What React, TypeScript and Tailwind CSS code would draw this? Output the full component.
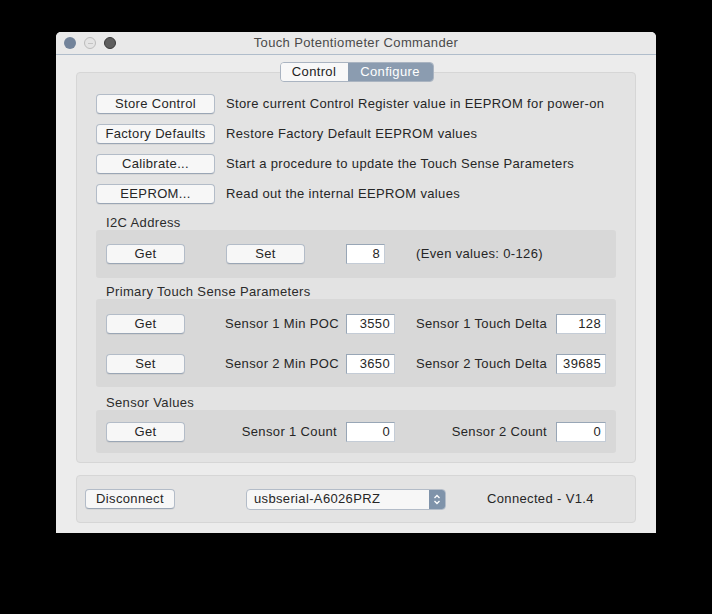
import * as React from 'react';

const font = { fontFamily: '"Liberation Sans", Arial, sans-serif' };

function Btn({ label, className = '' }: { label: string; className?: string }) {
  return (
    <div
      className={`flex h-[20px] items-center justify-center rounded-[4px] border border-[#b3bcc8] border-b-[#9aa6b5] bg-[#f7f7f7] text-[13px] text-[#262626] shadow-[0_1px_0_rgba(0,0,0,0.05)] ${className}`}
    >
      {label}
    </div>
  );
}

function Field({ value, className = '' }: { value: string; className?: string }) {
  return (
    <div
      className={`flex h-[20px] items-center justify-end border border-[#98a6b6] border-b-[#c4ccd6] border-r-[#c4ccd6] bg-white pr-[4px] text-[13px] text-[#262626] ${className}`}
    >
      {value}
    </div>
  );
}

function Label({ text }: { text: string }) {
  return <div className="flex h-[16px] items-center pl-[29px] pt-[1px] text-[13px] text-[#2b2b2b]">{text}</div>;
}

export default function App() {
  const actions = [
    ['Store Control', 'Store current Control Register value in EEPROM for power-on'],
    ['Factory Defaults', 'Restore Factory Default EEPROM values'],
    ['Calibrate...', 'Start a procedure to update the Touch Sense Parameters'],
    ['EEPROM...', 'Read out the internal EEPROM values'],
  ];

  return (
    <div className="h-[614px] w-[712px] bg-black pl-[56px] pt-[32px] tracking-[0.35px]" style={font}>
      <div className="flex h-[501px] w-[600px] flex-col rounded-t-[5px] bg-[#ececec]">
        {/* title bar */}
        <div className="relative flex h-[23px] items-center justify-center rounded-t-[5px] border-b border-[#b0bdcb] bg-[#e9e9e9]">
          <div className="absolute left-[8px] top-[5px] flex gap-[8px]">
            <div className="h-[12px] w-[12px] rounded-full bg-[#72839a]" />
            <div className="flex h-[12px] w-[12px] items-center justify-center rounded-full border border-[#bcbcbc] bg-[#e4e4e4]">
              <div className="h-[1px] w-[5px] bg-[#c4c4c4]" />
            </div>
            <div className="h-[12px] w-[12px] rounded-full border border-[#3a3a3a] bg-[#5e5e5e]" />
          </div>
          <span className="text-[13px] text-[#4a4a4a]">Touch Potentiometer Commander</span>
        </div>

        {/* segmented control */}
        <div className="relative z-10 mt-[7px] flex justify-center">
          <div className="ml-[1px] flex h-[20px] overflow-hidden rounded-[4px] border border-[#aab4c1] text-[13px]">
            <div className="flex w-[67px] items-center justify-center bg-[#f8f8f8] text-[#222]">Control</div>
            <div className="flex w-[85px] items-center justify-center bg-[#8b9cb0] text-white">Configure</div>
          </div>
        </div>

        {/* tab box */}
        <div className="mx-[20px] -mt-[10px] flex h-[391px] flex-col rounded-[4px] border border-[#d6d6d6] bg-[#e3e3e3] pt-[21px]">
          <div className="flex flex-col gap-[10px] pl-[19px]">
            {actions.map(([b, t]) => (
              <div key={b} className="flex items-center gap-[11px]">
                <Btn label={b} className="w-[119px]" />
                <span className="text-[13px] text-[#262626]">{t}</span>
              </div>
            ))}
          </div>

          <div className="mt-[10px]">
            <Label text="I2C Address" />
          </div>
          <div className="mx-[19px] flex h-[48px] items-center rounded-[3px] bg-[#d8d8d8] pl-[10px]">
            <Btn label="Get" className="w-[79px]" />
            <Btn label="Set" className="ml-[41px] w-[79px]" />
            <Field value="8" className="ml-[41px] w-[39px]" />
            <span className="ml-[31px] text-[13px] text-[#262626]">(Even values: 0-126)</span>
          </div>

          <div className="mt-[5px]">
            <Label text="Primary Touch Sense Parameters" />
          </div>
          <div className="mx-[19px] flex h-[88px] flex-col gap-[20px] rounded-[3px] bg-[#d8d8d8] pl-[10px] pt-[15px]">
            {[
              ['Get', 'Sensor 1 Min POC', '3550', 'Sensor 1 Touch Delta', '128'],
              ['Set', 'Sensor 2 Min POC', '3650', 'Sensor 2 Touch Delta', '39685'],
            ].map(([b, l1, v1, l2, v2]) => (
              <div key={b} className="flex items-center">
                <Btn label={b} className="w-[79px]" />
                <span className="w-[161px] pr-[7px] text-right text-[13px] text-[#262626]">{l1}</span>
                <Field value={v1} className="w-[49px]" />
                <span className="w-[161px] pr-[9px] text-right text-[13px] text-[#262626]">{l2}</span>
                <Field value={v2} className="w-[50px]" />
              </div>
            ))}
          </div>

          <div className="mt-[7px]">
            <Label text="Sensor Values" />
          </div>
          <div className="mx-[19px] flex h-[43px] items-center rounded-[3px] bg-[#d8d8d8] pl-[10px]">
            <Btn label="Get" className="w-[79px]" />
            <span className="w-[161px] pr-[9px] text-right text-[13px] text-[#262626]">Sensor 1 Count</span>
            <Field value="0" className="w-[49px]" />
            <span className="w-[161px] pr-[9px] text-right text-[13px] text-[#262626]">Sensor 2 Count</span>
            <Field value="0" className="w-[50px]" />
          </div>
        </div>

        {/* bottom box */}
        <div className="mx-[20px] mt-[12px] flex h-[48px] items-center rounded-[4px] border border-[#d6d6d6] bg-[#e3e3e3] pl-[8px]">
          <Btn label="Disconnect" className="w-[90px]" />
          <div className="ml-[71px] flex h-[21px] w-[200px] overflow-hidden rounded-[4px] border border-[#b3bcc8] bg-[#f7f7f7]">
            <div className="flex flex-1 items-center pl-[7px] text-[13px] text-[#262626]">usbserial-A6026PRZ</div>
            <div className="flex w-[16px] items-center justify-center bg-[#7f93aa]">
              <svg width="8" height="13" viewBox="0 0 8 13" fill="none" stroke="white" strokeWidth="1.3">
                <path d="M1.5 5 L4 2.5 L6.5 5" />
                <path d="M1.5 8 L4 10.5 L6.5 8" />
              </svg>
            </div>
          </div>
          <span className="ml-[41px] text-[13px] text-[#262626]">Connected - V1.4</span>
        </div>
      </div>
    </div>
  );
}
